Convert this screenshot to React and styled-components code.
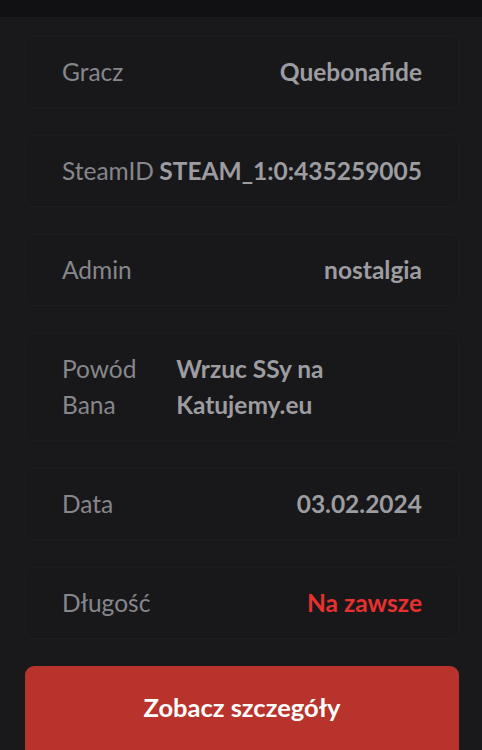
import styled, { createGlobalStyle } from "styled-components"

const GlobalStyle = createGlobalStyle`
  * { box-sizing: border-box; }
  html, body {
    margin: 0;
    padding: 0;
    background: #19191b;
    font-family: Lato, "Open Sans", sans-serif;
  }
`

const colors = {
  page: "#19191b",
  topBar: "#111113",
  card: "#18181a",
  cardBorder: "#1d1d1f",
  label: "#86868b",
  value: "#9d9da1",
  red: "#e8302e",
  button: "#b8332b",
}

const TopStrip = styled.div`
  height: 17px;
  background-color: ${colors.topBar};
`

const Wrapper = styled.main`
  display: flex;
  flex-direction: column;
  gap: 27px;
  padding: 19px 23px 0 25px;
`

const Card = styled.div`
  display: flex;
  justify-content: space-between;
  align-items: flex-start;
  padding: 17px 36px;
  background-color: ${colors.card};
  border: 1px solid ${colors.cardBorder};
  border-radius: 8px;
  font-size: 24.5px;
  line-height: 36px;
`

const Label = styled.span`
  color: ${colors.label};
  font-weight: 400;
`

const Value = styled.span`
  color: ${(p) => (p.$danger ? colors.red : colors.value)};
  font-weight: 700;
`

const DetailsButton = styled.button`
  height: 100px;
  border: none;
  border-radius: 9px;
  background-color: ${colors.button};
  color: #ffffff;
  font-family: inherit;
  font-size: 25.5px;
  font-weight: 700;
  padding: 26px 0 0;
  display: flex;
  justify-content: center;
  align-items: flex-start;
  cursor: pointer;
`

const rows = [
  { label: "Gracz", value: "Quebonafide" },
  { label: "SteamID", value: "STEAM_1:0:435259005" },
  { label: "Admin", value: "nostalgia" },
  { label: "Powód Bana", value: "Wrzuc SSy na Katujemy.eu" },
  { label: "Data", value: "03.02.2024" },
  { label: "Długość", value: "Na zawsze", danger: true },
]

const App = () => {
  return (
    <>
      <GlobalStyle />
      <TopStrip />
      <Wrapper>
        {rows.map((r) => (
          <Card key={r.label}>
            <Label>{r.label}</Label>
            <Value $danger={r.danger}>{r.value}</Value>
          </Card>
        ))}
        <DetailsButton>Zobacz szczegóły</DetailsButton>
      </Wrapper>
    </>
  )
}

export default App
